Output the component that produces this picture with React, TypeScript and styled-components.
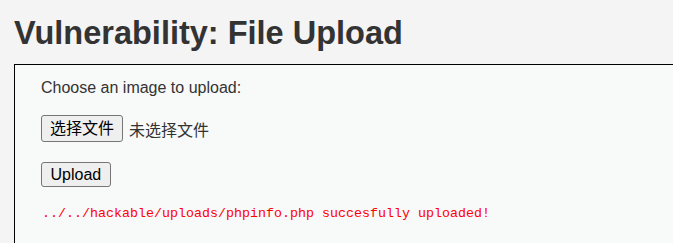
import React from "react";
import styled, { createGlobalStyle } from "styled-components";

const Global = createGlobalStyle`
  html, body { margin: 0; padding: 0; background: #f4f4f4; overflow: hidden; }
  body { font-family: Arial, "Liberation Sans", "Noto Sans CJK SC", sans-serif; color: #333; }
`;

const Page = styled.div`
  padding: 0 0 0 14px;
  width: 760px;
`;

const Title = styled.h1`
  margin: 14px 0 12px 0;
  font-size: 32.5px;
  line-height: 38px;
  font-weight: bold;
  color: #333;
  font-family: Arial, "Liberation Sans", sans-serif;
`;

const CodeArea = styled.div`
  border: 1px solid #000;
  background: #f8f9f9;
  padding: 14px 26px 40px 26px;
  display: flex;
  flex-direction: column;
  align-items: flex-start;
`;

const Label = styled.div`
  font-size: 16px;
  line-height: 18px;
  color: #333;
`;

const FileRow = styled.div`
  margin-top: 18px;
  display: flex;
  align-items: center;
  gap: 6px;
  font-family: "Liberation Sans", "Noto Sans CJK SC", sans-serif;
  font-size: 16px;
`;

const NativeButton = styled.button<{ $pad: number; $h: number }>`
  height: ${(p) => p.$h}px;
  padding: 0 ${(p) => p.$pad}px;
  background: #efefef;
  border: 1px solid #767676;
  border-radius: 3px;
  font-size: 16px;
  font-family: Arial, "Liberation Sans", "Noto Sans CJK SC", sans-serif;
  color: #000;
  line-height: 1;
  display: flex;
  align-items: center;
`;

const NoFile = styled.span`
  color: #333;
  font-family: "Noto Sans CJK SC", sans-serif;
  font-size: 16px;
`;

const UploadRow = styled.div`
  margin-top: 20px;
`;

const Message = styled.pre`
  margin: 19px 0 0 1px;
  font-family: "Liberation Mono", monospace;
  font-size: 13.33px;
  line-height: 15px;
  color: #ff0000;
`;

export default function App() {
  return (
    <>
      <Global />
      <Page>
        <Title>Vulnerability: File Upload</Title>
        <CodeArea>
          <Label>Choose an image to upload:</Label>
          <FileRow>
            <NativeButton $pad={8} $h={27}>选择文件</NativeButton>
            <NoFile>未选择文件</NoFile>
          </FileRow>
          <UploadRow>
            <NativeButton $pad={8.5} $h={25}>Upload</NativeButton>
          </UploadRow>
          <Message>../../hackable/uploads/phpinfo.php succesfully uploaded!</Message>
        </CodeArea>
      </Page>
    </>
  );
}
